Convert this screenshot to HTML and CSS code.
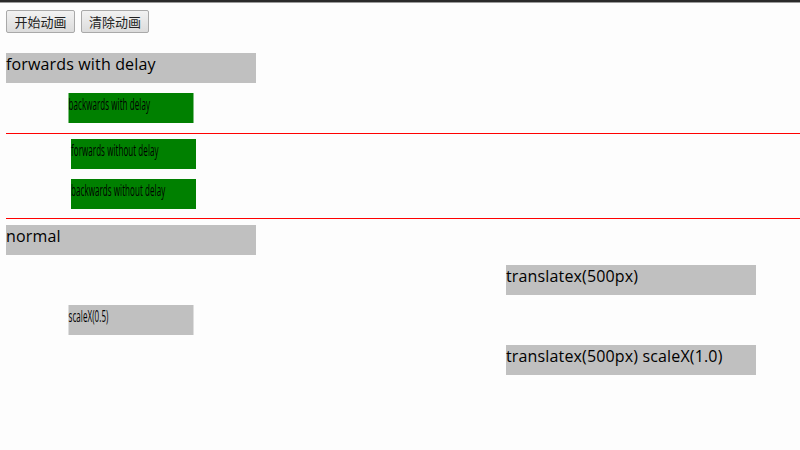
FILE: index.html
```html
<!DOCTYPE html>
<html>
<head>
<meta charset="utf-8">
<link rel="stylesheet" href="styles.css">
</head>
<body>
<div class="chrome"></div>
<div class="page">
  <div class="buttons">
    <button class="btn">开始动画</button>
    <button class="btn">清除动画</button>
  </div>
  <div class="box gray">forwards with delay</div>
  <div class="box green half">backwards with delay</div>
  <div class="rule rule-a"></div>
  <div class="box green half shift">forwards without delay</div>
  <div class="box green half shift">backwards without delay</div>
  <div class="rule rule-b"></div>
  <div class="box gray">normal</div>
  <div class="box gray moved">translatex(500px)</div>
  <div class="box gray half">scaleX(0.5)</div>
  <div class="box gray moved">translatex(500px) scaleX(1.0)</div>
</div>
</body>
</html>
```
FILE: styles.css
```css
html, body {
  margin: 0;
  padding: 0;
  background: #fdfdfd;
  width: 800px;
  height: 450px;
  overflow: hidden;
}
.chrome {
  height: 2px;
  background: #2a2a2a;
  border-bottom: 1px solid #9a9a9a;
}
.page {
  display: flex;
  flex-direction: column;
  padding: 7px 0 0 6px;
  font-family: "Open Sans", "Noto Sans", sans-serif;
  font-size: 16px;
  letter-spacing: 0.15px;
  color: #000;
}
.buttons {
  display: flex;
  gap: 6px;
  margin-bottom: 20px;
}
.btn {
  font-family: "Noto Sans CJK SC", sans-serif;
  font-size: 13px;
  letter-spacing: 0;
  height: 23px;
  padding: 0 7px;
  line-height: 19px;
  background: linear-gradient(#f2f2f2, #dcdcdc);
  border: 1px solid #a9a9a9;
  border-radius: 2px;
  color: #222;
}
.btn:first-child { width: 69px; }
.btn:last-child { width: 68px; }
.box {
  width: 250px;
  height: 30px;
  line-height: 22px;
  margin-bottom: 10px;
  flex: none;
}
.gray { background: #c0c0c0; }
.green { background: #008000; }
.half { transform: scaleX(0.5); }
.shift { transform: translateX(2.5px) scaleX(0.5); }
.moved { transform: translateX(500px); }
.rule {
  height: 1px;
  background: #ff0000;
  flex: none;
}
.rule-a { margin: 0 0 5px; }
.rule-b { margin: -1px 0 6px; }
```
